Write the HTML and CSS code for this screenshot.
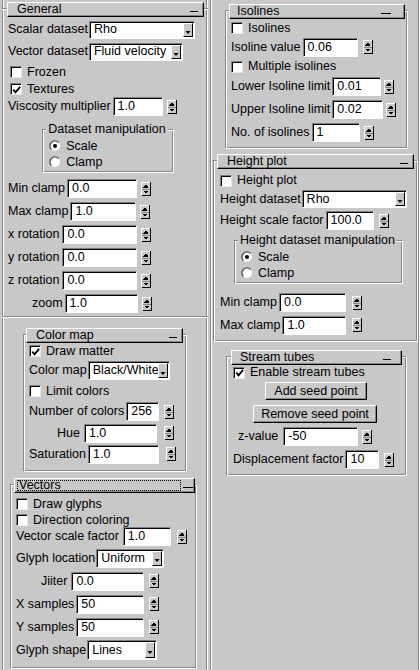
FILE: index.html
```html
<!DOCTYPE html>
<html>
<head>
<meta charset="utf-8">
<link rel="stylesheet" href="styles.css">
</head>
<body>
<div class="window">
  <div class="pane pane-left">
    <section class="panel panel-general">
      <div class="phead ph-general"><span class="ptitle">General</span><span class="dash"></span></div>
      <div class="pbody pb-general">
        <div class="row h23"><span class="lbl">Scalar dataset</span><span class="dd w106 hd18"><span class="dd-text">Rho</span><span class="dd-btn"><svg width="8" height="14" viewBox="0 0 8 14"><path d="M1.5 8h5l-2.5 3z" fill="#000"/></svg></span></span></div>
        <div class="row h21"><span class="lbl">Vector dataset</span><span class="dd w94 hd18"><span class="dd-text">Fluid velocity</span><span class="dd-btn"><svg width="8" height="14" viewBox="0 0 8 14"><path d="M1.5 8h5l-2.5 3z" fill="#000"/></svg></span></span></div>
        <div class="row h20 cb-in"><span class="cb"></span><span class="cb-lbl">Frozen</span></div>
        <div class="row h14 cb-in"><span class="cb"><svg width="10" height="10" viewBox="0 0 10 10"><path d="M1.5 4.5l2.5 3 5-6" stroke="#000" stroke-width="2" fill="none"/></svg></span><span class="cb-lbl">Textures</span></div>
        <div class="row h21"><span class="lbl">Viscosity multiplier</span><span class="entry w50">1.0</span><span class="spin"><svg width="10" height="14" viewBox="0 0 10 14"><rect width="10" height="14" fill="#c8c8c8"/><path d="M0.5 13V0.5H9" stroke="#fff" fill="none"/><path d="M0.5 13.5H9.5V0" stroke="#000" fill="none"/><path d="M1 7.5H9" stroke="#888"/><path d="M5 2.5L7.5 5.5H2.5z" fill="#000"/><path d="M2.5 9H7.5L5 12z" fill="#000"/></svg></span></div>
        <div class="group g-general">
          <span class="gtitle">Dataset manipulation</span>
          <div class="row h16"><span class="radio"><svg width="12" height="12" viewBox="0 0 12 12"><circle cx="6" cy="6" r="5" fill="#fff"/><path d="M2.4 9.6A5 5 0 0 1 9.6 2.4" stroke="#555" stroke-width="1.4" fill="none"/><circle cx="6" cy="6" r="2" fill="#000"/></svg></span><span class="cb-lbl">Scale</span></div>
          <div class="row h16"><span class="radio"><svg width="12" height="12" viewBox="0 0 12 12"><circle cx="6" cy="6" r="5" fill="#fff"/><path d="M2.4 9.6A5 5 0 0 1 9.6 2.4" stroke="#555" stroke-width="1.4" fill="none"/></svg></span><span class="cb-lbl">Clamp</span></div>
        </div>
        <div class="row h23 mt4"><span class="lbl">Min clamp</span><span class="entry w70">0.0</span><span class="spin"><svg width="10" height="14" viewBox="0 0 10 14"><rect width="10" height="14" fill="#c8c8c8"/><path d="M0.5 13V0.5H9" stroke="#fff" fill="none"/><path d="M0.5 13.5H9.5V0" stroke="#000" fill="none"/><path d="M1 7.5H9" stroke="#888"/><path d="M5 2.5L7.5 5.5H2.5z" fill="#000"/><path d="M2.5 9H7.5L5 12z" fill="#000"/></svg></span></div>
        <div class="row h23"><span class="lbl">Max clamp</span><span class="entry w66">1.0</span><span class="spin"><svg width="10" height="14" viewBox="0 0 10 14"><rect width="10" height="14" fill="#c8c8c8"/><path d="M0.5 13V0.5H9" stroke="#fff" fill="none"/><path d="M0.5 13.5H9.5V0" stroke="#000" fill="none"/><path d="M1 7.5H9" stroke="#888"/><path d="M5 2.5L7.5 5.5H2.5z" fill="#000"/><path d="M2.5 9H7.5L5 12z" fill="#000"/></svg></span></div>
        <div class="row h23"><span class="lbl">x rotation</span><span class="entry w75 g3">0.0</span><span class="spin"><svg width="10" height="14" viewBox="0 0 10 14"><rect width="10" height="14" fill="#c8c8c8"/><path d="M0.5 13V0.5H9" stroke="#fff" fill="none"/><path d="M0.5 13.5H9.5V0" stroke="#000" fill="none"/><path d="M1 7.5H9" stroke="#888"/><path d="M5 2.5L7.5 5.5H2.5z" fill="#000"/><path d="M2.5 9H7.5L5 12z" fill="#000"/></svg></span></div>
        <div class="row h23"><span class="lbl">y rotation</span><span class="entry w75 g3">0.0</span><span class="spin"><svg width="10" height="14" viewBox="0 0 10 14"><rect width="10" height="14" fill="#c8c8c8"/><path d="M0.5 13V0.5H9" stroke="#fff" fill="none"/><path d="M0.5 13.5H9.5V0" stroke="#000" fill="none"/><path d="M1 7.5H9" stroke="#888"/><path d="M5 2.5L7.5 5.5H2.5z" fill="#000"/><path d="M2.5 9H7.5L5 12z" fill="#000"/></svg></span></div>
        <div class="row h23"><span class="lbl">z rotation</span><span class="entry w75 g3">0.0</span><span class="spin"><svg width="10" height="14" viewBox="0 0 10 14"><rect width="10" height="14" fill="#c8c8c8"/><path d="M0.5 13V0.5H9" stroke="#fff" fill="none"/><path d="M0.5 13.5H9.5V0" stroke="#000" fill="none"/><path d="M1 7.5H9" stroke="#888"/><path d="M5 2.5L7.5 5.5H2.5z" fill="#000"/><path d="M2.5 9H7.5L5 12z" fill="#000"/></svg></span></div>
        <div class="row h23"><span class="lbl in24">zoom</span><span class="entry w73">1.0</span><span class="spin"><svg width="10" height="14" viewBox="0 0 10 14"><rect width="10" height="14" fill="#c8c8c8"/><path d="M0.5 13V0.5H9" stroke="#fff" fill="none"/><path d="M0.5 13.5H9.5V0" stroke="#000" fill="none"/><path d="M1 7.5H9" stroke="#888"/><path d="M5 2.5L7.5 5.5H2.5z" fill="#000"/><path d="M2.5 9H7.5L5 12z" fill="#000"/></svg></span></div>
      </div>
    </section>

    <section class="panel panel-colormap">
      <div class="phead ph-colormap"><span class="ptitle">Color map</span><span class="dash"></span></div>
      <div class="pbody pb-colormap">
        <div class="row h16"><span class="cb"><svg width="10" height="10" viewBox="0 0 10 10"><path d="M1.5 4.5l2.5 3 5-6" stroke="#000" stroke-width="2" fill="none"/></svg></span><span class="cb-lbl">Draw matter</span></div>
        <div class="row h23"><span class="lbl">Color map</span><span class="dd w82 hd19"><span class="dd-text">Black/White</span><span class="dd-btn"><svg width="8" height="14" viewBox="0 0 8 14"><path d="M1.5 8h5l-2.5 3z" fill="#000"/></svg></span></span></div>
        <div class="row h18"><span class="cb"></span><span class="cb-lbl">Limit colors</span></div>
        <div class="row h23"><span class="lbl">Number of colors</span><span class="entry w33">256</span><span class="spin s5"><svg width="10" height="14" viewBox="0 0 10 14"><rect width="10" height="14" fill="#c8c8c8"/><path d="M0.5 13V0.5H9" stroke="#fff" fill="none"/><path d="M0.5 13.5H9.5V0" stroke="#000" fill="none"/><path d="M1 7.5H9" stroke="#888"/><path d="M5 2.5L7.5 5.5H2.5z" fill="#000"/><path d="M2.5 9H7.5L5 12z" fill="#000"/></svg></span></div>
        <div class="row h20"><span class="lbl in28">Hue</span><span class="entry w73 g4">1.0</span><span class="spin s7"><svg width="10" height="14" viewBox="0 0 10 14"><rect width="10" height="14" fill="#c8c8c8"/><path d="M0.5 13V0.5H9" stroke="#fff" fill="none"/><path d="M0.5 13.5H9.5V0" stroke="#000" fill="none"/><path d="M1 7.5H9" stroke="#888"/><path d="M5 2.5L7.5 5.5H2.5z" fill="#000"/><path d="M2.5 9H7.5L5 12z" fill="#000"/></svg></span></div>
        <div class="row h22"><span class="lbl">Saturation</span><span class="entry w71">1.0</span><span class="spin s7"><svg width="10" height="14" viewBox="0 0 10 14"><rect width="10" height="14" fill="#c8c8c8"/><path d="M0.5 13V0.5H9" stroke="#fff" fill="none"/><path d="M0.5 13.5H9.5V0" stroke="#000" fill="none"/><path d="M1 7.5H9" stroke="#888"/><path d="M5 2.5L7.5 5.5H2.5z" fill="#000"/><path d="M2.5 9H7.5L5 12z" fill="#000"/></svg></span></div>
      </div>
    </section>

    <section class="panel panel-vectors">
      <div class="phead ph-vectors"><span class="focus">Vectors</span><span class="dash d-vec"></span></div>
      <div class="pbody pb-vectors">
        <div class="row h18"><span class="cb"></span><span class="cb-lbl">Draw glyphs</span></div>
        <div class="row h14"><span class="cb"></span><span class="cb-lbl">Direction coloring</span></div>
        <div class="row h19"><span class="lbl">Vector scale factor</span><span class="entry w48 g4">1.0</span><span class="spin s6"><svg width="10" height="14" viewBox="0 0 10 14"><rect width="10" height="14" fill="#c8c8c8"/><path d="M0.5 13V0.5H9" stroke="#fff" fill="none"/><path d="M0.5 13.5H9.5V0" stroke="#000" fill="none"/><path d="M1 7.5H9" stroke="#888"/><path d="M5 2.5L7.5 5.5H2.5z" fill="#000"/><path d="M2.5 9H7.5L5 12z" fill="#000"/></svg></span></div>
        <div class="row h24"><span class="lbl">Glyph location</span><span class="dd w68 hd19"><span class="dd-text">Uniform</span><span class="dd-btn"><svg width="8" height="14" viewBox="0 0 8 14"><path d="M1.5 8h5l-2.5 3z" fill="#000"/></svg></span></span></div>
        <div class="row h22"><span class="lbl in25">Jiiter</span><span class="entry w73 g4">0.0</span><span class="spin s5"><svg width="10" height="14" viewBox="0 0 10 14"><rect width="10" height="14" fill="#c8c8c8"/><path d="M0.5 13V0.5H9" stroke="#fff" fill="none"/><path d="M0.5 13.5H9.5V0" stroke="#000" fill="none"/><path d="M1 7.5H9" stroke="#888"/><path d="M5 2.5L7.5 5.5H2.5z" fill="#000"/><path d="M2.5 9H7.5L5 12z" fill="#000"/></svg></span></div>
        <div class="row h24"><span class="lbl">X samples</span><span class="entry w68">50</span><span class="spin s5"><svg width="10" height="14" viewBox="0 0 10 14"><rect width="10" height="14" fill="#c8c8c8"/><path d="M0.5 13V0.5H9" stroke="#fff" fill="none"/><path d="M0.5 13.5H9.5V0" stroke="#000" fill="none"/><path d="M1 7.5H9" stroke="#888"/><path d="M5 2.5L7.5 5.5H2.5z" fill="#000"/><path d="M2.5 9H7.5L5 12z" fill="#000"/></svg></span></div>
        <div class="row h22"><span class="lbl">Y samples</span><span class="entry w68">50</span><span class="spin s5"><svg width="10" height="14" viewBox="0 0 10 14"><rect width="10" height="14" fill="#c8c8c8"/><path d="M0.5 13V0.5H9" stroke="#fff" fill="none"/><path d="M0.5 13.5H9.5V0" stroke="#000" fill="none"/><path d="M1 7.5H9" stroke="#888"/><path d="M5 2.5L7.5 5.5H2.5z" fill="#000"/><path d="M2.5 9H7.5L5 12z" fill="#000"/></svg></span></div>
        <div class="row h24"><span class="lbl">Glyph shape</span><span class="dd w70 hd20"><span class="dd-text">Lines</span><span class="dd-btn"><svg width="8" height="14" viewBox="0 0 8 14"><path d="M1.5 8h5l-2.5 3z" fill="#000"/></svg></span></span></div>
      </div>
    </section>
  </div>

  <div class="pane pane-right">
    <section class="panel panel-isolines">
      <div class="phead ph-isolines"><span class="ptitle pt7">Isolines</span><span class="dash d-far"></span></div>
      <div class="pbody pb-isolines">
        <div class="row h16"><span class="cb"></span><span class="cb-lbl">Isolines</span></div>
        <div class="row h22"><span class="lbl">Isoline value</span><span class="entry w55">0.06</span><span class="spin s5"><svg width="10" height="14" viewBox="0 0 10 14"><rect width="10" height="14" fill="#c8c8c8"/><path d="M0.5 13V0.5H9" stroke="#fff" fill="none"/><path d="M0.5 13.5H9.5V0" stroke="#000" fill="none"/><path d="M1 7.5H9" stroke="#888"/><path d="M5 2.5L7.5 5.5H2.5z" fill="#000"/><path d="M2.5 9H7.5L5 12z" fill="#000"/></svg></span></div>
        <div class="row h17"><span class="cb"></span><span class="cb-lbl">Multiple isolines</span></div>
        <div class="row h23"><span class="lbl">Lower Isoline limit</span><span class="entry w49">0.01</span><span class="spin s3"><svg width="10" height="14" viewBox="0 0 10 14"><rect width="10" height="14" fill="#c8c8c8"/><path d="M0.5 13V0.5H9" stroke="#fff" fill="none"/><path d="M0.5 13.5H9.5V0" stroke="#000" fill="none"/><path d="M1 7.5H9" stroke="#888"/><path d="M5 2.5L7.5 5.5H2.5z" fill="#000"/><path d="M2.5 9H7.5L5 12z" fill="#000"/></svg></span></div>
        <div class="row h23"><span class="lbl">Upper Isoline limit</span><span class="entry w51">0.02</span><span class="spin s3"><svg width="10" height="14" viewBox="0 0 10 14"><rect width="10" height="14" fill="#c8c8c8"/><path d="M0.5 13V0.5H9" stroke="#fff" fill="none"/><path d="M0.5 13.5H9.5V0" stroke="#000" fill="none"/><path d="M1 7.5H9" stroke="#888"/><path d="M5 2.5L7.5 5.5H2.5z" fill="#000"/><path d="M2.5 9H7.5L5 12z" fill="#000"/></svg></span></div>
        <div class="row h23"><span class="lbl">No. of isolines</span><span class="entry w48">1</span><span class="spin"><svg width="10" height="14" viewBox="0 0 10 14"><rect width="10" height="14" fill="#c8c8c8"/><path d="M0.5 13V0.5H9" stroke="#fff" fill="none"/><path d="M0.5 13.5H9.5V0" stroke="#000" fill="none"/><path d="M1 7.5H9" stroke="#888"/><path d="M5 2.5L7.5 5.5H2.5z" fill="#000"/><path d="M2.5 9H7.5L5 12z" fill="#000"/></svg></span></div>
      </div>
    </section>

    <section class="panel panel-height">
      <div class="phead ph-height"><span class="ptitle">Height plot</span><span class="dash"></span></div>
      <div class="pbody pb-height">
        <div class="row h17"><span class="cb"></span><span class="cb-lbl">Height plot</span></div>
        <div class="row h20"><span class="lbl">Height dataset</span><span class="dd w105 hd18"><span class="dd-text">Rho</span><span class="dd-btn"><svg width="8" height="14" viewBox="0 0 8 14"><path d="M1.5 8h5l-2.5 3z" fill="#000"/></svg></span></span></div>
        <div class="row h23"><span class="lbl">Height scale factor</span><span class="entry w48">100.0</span><span class="spin s5"><svg width="10" height="14" viewBox="0 0 10 14"><rect width="10" height="14" fill="#c8c8c8"/><path d="M0.5 13V0.5H9" stroke="#fff" fill="none"/><path d="M0.5 13.5H9.5V0" stroke="#000" fill="none"/><path d="M1 7.5H9" stroke="#888"/><path d="M5 2.5L7.5 5.5H2.5z" fill="#000"/><path d="M2.5 9H7.5L5 12z" fill="#000"/></svg></span></div>
        <div class="group g-height">
          <span class="gtitle">Height dataset manipulation</span>
          <div class="row h16"><span class="radio"><svg width="12" height="12" viewBox="0 0 12 12"><circle cx="6" cy="6" r="5" fill="#fff"/><path d="M2.4 9.6A5 5 0 0 1 9.6 2.4" stroke="#555" stroke-width="1.4" fill="none"/><circle cx="6" cy="6" r="2" fill="#000"/></svg></span><span class="cb-lbl">Scale</span></div>
          <div class="row h16"><span class="radio"><svg width="12" height="12" viewBox="0 0 12 12"><circle cx="6" cy="6" r="5" fill="#fff"/><path d="M2.4 9.6A5 5 0 0 1 9.6 2.4" stroke="#555" stroke-width="1.4" fill="none"/></svg></span><span class="cb-lbl">Clamp</span></div>
        </div>
        <div class="row h23 mt7"><span class="lbl">Min clamp</span><span class="entry w67">0.0</span><span class="spin s6"><svg width="10" height="14" viewBox="0 0 10 14"><rect width="10" height="14" fill="#c8c8c8"/><path d="M0.5 13V0.5H9" stroke="#fff" fill="none"/><path d="M0.5 13.5H9.5V0" stroke="#000" fill="none"/><path d="M1 7.5H9" stroke="#888"/><path d="M5 2.5L7.5 5.5H2.5z" fill="#000"/><path d="M2.5 9H7.5L5 12z" fill="#000"/></svg></span></div>
        <div class="row h22"><span class="lbl">Max clamp</span><span class="entry w64">1.0</span><span class="spin s6"><svg width="10" height="14" viewBox="0 0 10 14"><rect width="10" height="14" fill="#c8c8c8"/><path d="M0.5 13V0.5H9" stroke="#fff" fill="none"/><path d="M0.5 13.5H9.5V0" stroke="#000" fill="none"/><path d="M1 7.5H9" stroke="#888"/><path d="M5 2.5L7.5 5.5H2.5z" fill="#000"/><path d="M2.5 9H7.5L5 12z" fill="#000"/></svg></span></div>
      </div>
    </section>

    <section class="panel panel-stream">
      <div class="phead ph-stream"><span class="ptitle pt8">Stream tubes</span><span class="dash d-mid"></span></div>
      <div class="pbody pb-stream">
        <div class="row h15"><span class="cb"><svg width="10" height="10" viewBox="0 0 10 10"><path d="M1.5 4.5l2.5 3 5-6" stroke="#000" stroke-width="2" fill="none"/></svg></span><span class="cb-lbl">Enable stream tubes</span></div>
        <button class="btn btn-add">Add seed point</button>
        <button class="btn btn-remove">Remove seed point</button>
        <div class="row h23 mt2"><span class="lbl in5">z-value</span><span class="entry w75 g5">-50</span><span class="spin"><svg width="10" height="14" viewBox="0 0 10 14"><rect width="10" height="14" fill="#c8c8c8"/><path d="M0.5 13V0.5H9" stroke="#fff" fill="none"/><path d="M0.5 13.5H9.5V0" stroke="#000" fill="none"/><path d="M1 7.5H9" stroke="#888"/><path d="M5 2.5L7.5 5.5H2.5z" fill="#000"/><path d="M2.5 9H7.5L5 12z" fill="#000"/></svg></span></div>
        <div class="row h23"><span class="lbl">Displacement factor</span><span class="entry w34">10</span><span class="spin s5"><svg width="10" height="14" viewBox="0 0 10 14"><rect width="10" height="14" fill="#c8c8c8"/><path d="M0.5 13V0.5H9" stroke="#fff" fill="none"/><path d="M0.5 13.5H9.5V0" stroke="#000" fill="none"/><path d="M1 7.5H9" stroke="#888"/><path d="M5 2.5L7.5 5.5H2.5z" fill="#000"/><path d="M2.5 9H7.5L5 12z" fill="#000"/></svg></span></div>
      </div>
    </section>
  </div>
</div>
</body>
</html>
```

FILE: styles.css
```css
* { box-sizing: border-box; }

body {
  margin: 0;
  background: #c8c8c8;
  color: #000;
  font-family: "Liberation Sans", Arial, sans-serif;
  font-size: 12.5px;
  line-height: 15px;
}

.window {
  display: flex;
  width: 420px;
  height: 670px;
  overflow: hidden;
}

/* columns with groove side lines */
.pane {
  display: flex;
  flex-direction: column;
  align-items: flex-start;
  height: 670px;
  box-shadow: inset 1px 0 #888, inset -1px 0 #fff, inset 2px 0 #fff, inset -2px 0 #888;
}
.pane-left { margin-left: 2px; width: 206px; }
.pane-right { margin-left: 2px; width: 210px; }

/* collapsible frames */
.panel {
  display: flex;
  flex-direction: column;
  flex-shrink: 0;
  border: 1px solid;
  border-color: #888 #fff #fff #888;
  box-shadow: inset 1px 1px #fff, inset -1px -1px #888;
}
.panel-general {
  align-self: stretch;
  margin-top: 8px;
  border-left: none;
  border-right: none;
  box-shadow: inset 0 1px #fff, inset 0 -1px #888;
}
.panel-colormap { margin: 16px 0 0 21px; width: 164px; }
.panel-vectors { margin: 12px 0 0 8px; width: 187px; }
.panel-isolines { margin: 10px 0 0 15px; width: 183px; }
.panel-height { margin: 11px 0 0 3px; width: 205px; }
.panel-stream { margin: 14px 0 0 16px; width: 181px; }

.phead {
  display: flex;
  align-items: center;
  height: 15px;
  margin-top: -7px;
  background: #c8c8c8;
  border: 1px solid;
  border-color: #fff #000 #000 #fff;
  box-shadow: inset -1px -1px #888;
}
.ph-general { margin-left: 5px; margin-right: 4px; }
.ph-colormap { margin-left: 2px; margin-right: 3px; }
.ph-vectors { margin-left: 3px; margin-right: 1px; }
.ph-isolines { margin-left: 3px; margin-right: 2px; }
.ph-height { margin-left: 3px; margin-right: 3px; }
.ph-stream { margin-left: 4px; margin-right: 4px; }

.ptitle { padding-left: 9px; white-space: nowrap; }
.ptitle.pt7 { padding-left: 7px; }
.ptitle.pt8 { padding-left: 8px; }

.focus {
  margin-left: 2px;
  width: 164px;
  height: 11px;
  line-height: 10px;
  padding-left: 2px;
  outline: 1px dotted #000;
  outline-offset: -1px;
  white-space: nowrap;
}

.dash {
  width: 8px;
  height: 1px;
  background: #000;
  margin-left: auto;
  margin-right: 5px;
  margin-top: 3px;
}
.dash.d-far { width: 10px; margin-right: 13px; }
.dash.d-mid { width: 8px; margin-right: 10px; }
.dash.d-vec { width: 10px; margin-right: 1px; }

/* bodies */
.pbody { display: flex; flex-direction: column; }
.pb-general { padding: 1px 0 2px 6px; }
.pb-colormap { padding: 0 0 6px 5px; }
.pb-vectors { padding: 2px 0 6px 5px; }
.pb-isolines { padding: 1px 0 4px 5px; }
.pb-height { padding: 3px 0 5px 6px; }
.pb-stream { padding: 0 0 4px 6px; }

.row { display: flex; align-items: center; flex-shrink: 0; }
.h14 { height: 14px; } .h15 { height: 15px; } .h16 { height: 16px; }
.h17 { height: 17px; } .h18 { height: 18px; } .h19 { height: 19px; }
.h20 { height: 20px; } .h21 { height: 21px; } .h22 { height: 22px; }
.h23 { height: 23px; } .h24 { height: 24px; }
.mt2 { margin-top: 2px; } .mt4 { margin-top: 4px; } .mt7 { margin-top: 7px; }

.lbl { white-space: nowrap; }
.in5 { margin-left: 5px; } .in24 { margin-left: 24px; }
.in25 { margin-left: 25px; } .in28 { margin-left: 28px; }

/* text entries */
.entry {
  display: flex;
  align-items: center;
  height: 19px;
  margin-left: 2px;
  padding-left: 4px;
  background: #fff;
  border: 1px solid;
  border-color: #808080 #fff #fff #808080;
  box-shadow: inset 1px 1px #000;
  white-space: nowrap;
}
.entry.g3 { margin-left: 3px; }
.entry.g4 { margin-left: 4px; }
.entry.g5 { margin-left: 5px; }
.w33 { width: 33px; } .w34 { width: 34px; } .w48 { width: 48px; }
.w49 { width: 49px; } .w50 { width: 50px; } .w51 { width: 51px; }
.w55 { width: 55px; } .w64 { width: 64px; } .w66 { width: 66px; }
.w67 { width: 67px; } .w68 { width: 68px; } .w70 { width: 70px; }
.w71 { width: 71px; } .w73 { width: 73px; } .w75 { width: 75px; }
.w82 { width: 82px; } .w94 { width: 94px; } .w105 { width: 105px; }
.w106 { width: 106px; }

.spin { display: block; width: 10px; height: 14px; margin-left: 4px; flex-shrink: 0; }
.spin svg { display: block; shape-rendering: crispEdges; }
.spin.s3 { margin-left: 3px; } .spin.s5 { margin-left: 5px; }
.spin.s6 { margin-left: 6px; } .spin.s7 { margin-left: 7px; }

/* option menus */
.dd {
  display: flex;
  margin-left: 1px;
  background: #fff;
  border: 1px solid;
  border-color: #808080 #fff #fff #808080;
  box-shadow: inset 1px 1px #000;
}
.hd18 { height: 18px; } .hd19 { height: 19px; } .hd20 { height: 20px; }
.dd-text { flex: 1; padding-left: 4px; align-self: center; white-space: nowrap; overflow: hidden; }
.dd-btn {
  width: 10px;
  margin: 1px 1px 1px 0;
  background: #c8c8c8;
  border: 1px solid;
  border-color: #fff #000 #000 #fff;
  display: flex;
  align-items: center;
  justify-content: center;
}
.dd-btn svg { display: block; }

/* check boxes and radios */
.cb {
  width: 12px;
  height: 12px;
  flex-shrink: 0;
  background: #fff;
  border: 1px solid;
  border-color: #808080 #e8e8e8 #e8e8e8 #808080;
  box-shadow: inset 1px 1px #000;
  display: flex;
  align-items: center;
  justify-content: center;
}
.cb svg { display: block; margin: 1px 0 0 1px; }
.cb-in .cb { margin-left: 2px; }
.cb-lbl { margin-left: 5px; white-space: nowrap; }
.radio { width: 12px; height: 12px; flex-shrink: 0; }
.radio svg { display: block; }

/* group boxes */
.group {
  display: flex;
  flex-direction: column;
  align-self: center;
  border: 1px solid;
  border-color: #888 #fff #fff #888;
  box-shadow: inset 1px 1px #fff, inset -1px -1px #888;
  padding: 0 5px 2px 6px;
}
.g-general { margin-top: 12px; }
.g-height { margin-top: 8px; }
.gtitle {
  align-self: flex-start;
  margin: -8px 0 1px -3px;
  padding: 0 2px;
  background: #c8c8c8;
  white-space: nowrap;
}

/* push buttons */
.btn {
  align-self: flex-start;
  height: 18px;
  padding: 0;
  font: inherit;
  color: #000;
  background: #c8c8c8;
  border: 1px solid;
  border-color: #fff #000 #000 #fff;
  box-shadow: inset -1px -1px #888;
}
.btn-add { width: 102px; margin: 2px 0 0 32px; }
.btn-remove { width: 124px; margin: 5px 0 0 20px; }
```
